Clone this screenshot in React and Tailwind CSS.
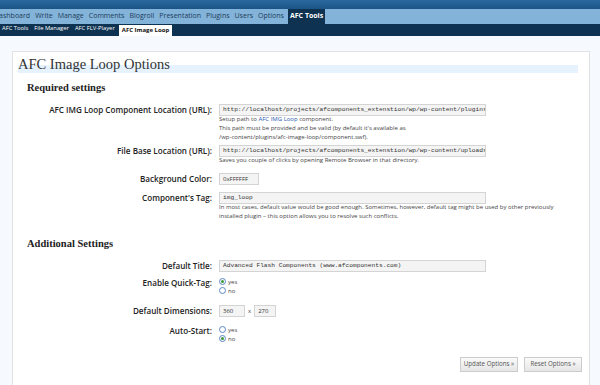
const navItems = ["Dashboard", "Write", "Manage", "Comments", "Blogroll", "Presentation", "Plugins", "Users", "Options"];
const subItems = ["AFC Tools", "File Manager", "AFC FLV-Player"];

function Radio({ checked, label }) {
  return (
    <div className="flex h-[9px] items-center gap-[2px]">
      <span className="flex h-[7px] w-[7px] items-center justify-center rounded-full border border-[#5b86c6] bg-white">
        {checked && <span className="h-[3px] w-[3px] rounded-full bg-[#3a9a3a]" />}
      </span>
      <span className="text-[6px] leading-none text-[#444]">{label}</span>
    </div>
  );
}

function Row({ label, className = "", children }) {
  return (
    <div className={`flex items-start ${className}`}>
      <div className="w-[200px] shrink-0 pr-[1px] text-right text-[8.1px] font-semibold leading-[12px] text-[#222]">
        {label}
      </div>
      <div className="ml-[6px] flex-1">{children}</div>
    </div>
  );
}

function TextInput({ value, mono = true, className = "w-[267px]" }) {
  return (
    <div
      className={`h-[12px] overflow-hidden whitespace-nowrap border border-[#d4d4d4] bg-[#f4f4f4] px-[3px] leading-[10px] text-[#333] ${mono ? "text-[6.2px]" : "text-[6px]"} ${className}`}
      style={{ fontFamily: mono ? '"Liberation Mono", monospace' : '"Open Sans", sans-serif' }}
    >
      {value}
    </div>
  );
}

function Help({ children }) {
  return <div className="mt-[-1px] text-[6px] leading-[9px] text-[#444]">{children}</div>;
}

const serif = { fontFamily: '"Liberation Serif", Georgia, serif' };

export default function App() {
  return (
    <div className="h-[385px] w-[600px] overflow-hidden bg-[#f6fafe]" style={{ fontFamily: '"Open Sans", "DejaVu Sans", sans-serif' }}>
      {/* Header */}
      <div className="h-[9px] bg-gradient-to-b from-[#2a6aa0] to-[#1b5486]" />
      <div className="flex h-[15px] items-center bg-[#83b3d8] text-[7px] text-[#1d3d5c]">
        <div className="ml-[-6px] flex items-center gap-[5px]">
          {navItems.map((n) => (
            <span key={n}>{n}</span>
          ))}
        </div>
        <span className="ml-[4px] flex h-full items-center bg-[#0f3250] px-[2px] font-bold text-white">AFC Tools</span>
      </div>
      <div className="flex h-[12px] items-end bg-[#0e3352] text-[5.8px] text-white">
        <div className="mb-[3px] ml-[2px] flex gap-[6px]">
          {subItems.map((s) => (
            <span key={s}>{s}</span>
          ))}
        </div>
        <span className="ml-[4px] flex h-[11px] items-center bg-white px-[3px] text-[6px] font-bold text-[#111]">AFC Image Loop</span>
      </div>

      {/* Panel */}
      <div className="ml-[12px] mt-[15px] h-[340px] w-[578px] border border-[#e2e2e2] bg-white">
        <div className="relative mx-[5px] mt-[2px] h-[20px]">
          <div className="absolute bottom-[1px] left-0 right-[6px] h-[8px] bg-[#e6f3ff]" />
          <h1 className="relative text-[14.5px] leading-[20px] text-[#333]" style={serif}>
            AFC Image Loop Options
          </h1>
        </div>

        <h2 className="ml-[14px] mt-[8px] text-[10.5px] font-bold leading-[12px] text-[#222]" style={serif}>
          Required settings
        </h2>

        <Row label="AFC IMG Loop Component Location (URL):" className="mt-[10px]">
          <TextInput value="http://localhost/projects/afcomponents_extenstion/wp/wp-content/plugins/afc-image-loop/component.swf" />
          <Help>
            Setup path to <span className="text-[#2a5db0]">AFC IMG Loop</span> component.
            <br />
            This path must be provided and be valid (by default it's available as
            <br />
            /wp-content/plugins/afc-image-loop/component.swf).
          </Help>
        </Row>

        <Row label="File Base Location (URL):" className="mt-[3px]">
          <TextInput value="http://localhost/projects/afcomponents_extenstion/wp/wp-content/uploads" />
          <Help>Saves you couple of clicks by opening Remote Browser in that directory.</Help>
        </Row>

        <Row label="Background Color:" className="mt-[8px]">
          <TextInput value="0xFFFFFF" mono={false} className="w-[40px]" />
        </Row>

        <Row label="Component's Tag:" className="mt-[7px]">
          <TextInput value="img_loop" />
          <Help>
            In most cases, default value would be good enough. Sometimes, however, default tag might be used by other previously
            <br />
            installed plugin – this option allows you to resolve such conflicts.
          </Help>
        </Row>

        <h2 className="ml-[14px] mt-[17px] text-[10.5px] font-bold leading-[12px] text-[#222]" style={serif}>
          Additional Settings
        </h2>

        <Row label="Default Title:" className="mt-[10px]">
          <TextInput value="Advanced Flash Components (www.afcomponents.com)" />
        </Row>

        <Row label="Enable Quick-Tag:" className="mt-[5px]">
          <Radio checked label="yes" />
          <Radio label="no" />
        </Row>

        <Row label="Default Dimensions:" className="mt-[10px]">
          <div className="flex items-center gap-[3px]">
            <TextInput value="360" mono={false} className="w-[26px]" />
            <span className="text-[6px] text-[#444]">x</span>
            <TextInput value="270" mono={false} className="w-[22px]" />
          </div>
        </Row>

        <Row label="Auto-Start:" className="mt-[8px]">
          <Radio label="yes" />
          <Radio checked label="no" />
        </Row>

        <div className="mr-[7px] mt-[14px] flex justify-end gap-[6px]">
          <button className="h-[15px] w-[58px] border border-[#ccc] bg-gradient-to-b from-[#fafafa] to-[#e6e6e6] text-[6.2px] leading-none text-[#555]">
            Update Options »
          </button>
          <button className="h-[15px] w-[58px] border border-[#ccc] bg-gradient-to-b from-[#fafafa] to-[#e6e6e6] text-[6.2px] leading-none text-[#555]">
            Reset Options »
          </button>
        </div>
      </div>
    </div>
  );
}
